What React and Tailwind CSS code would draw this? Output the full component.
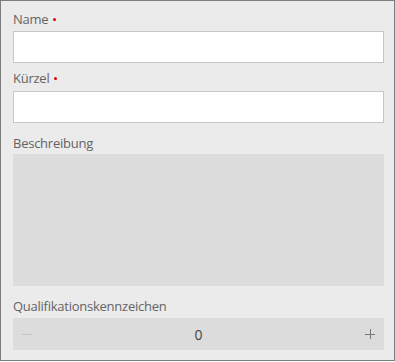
import React from 'react';

const Label = ({ children, required, className = '' }) => (
    <div className={`flex items-center h-5 leading-5 text-[13px] tracking-[-0.25px] text-[#646464] ${className}`}>
        <span>{children}</span>
        {required && <span className="ml-[5px] w-[3px] h-[3px] rounded-full bg-[#e00000]" />}
    </div>
);

const App = () => {
    return (
        <div
            className="w-[395px] h-[361px] border border-[#7d7d7d] bg-[#ebebeb] pl-[12px] pr-[10px] pt-[8px]"
            style={{ fontFamily: '"Open Sans", "Noto Sans", sans-serif' }}
        >
            {/* Name */}
            <Label required>Name</Label>
            <input type="text" className="mt-[2px] block w-full h-8 bg-white border border-[#c6c6c6] outline-none px-2 text-sm" />

            {/* Kürzel */}
            <Label required className="mt-[5px]">Kürzel</Label>
            <input type="text" className="mt-[3px] block w-full h-8 bg-white border border-[#c6c6c6] outline-none px-2 text-sm" />

            {/* Beschreibung */}
            <Label className="mt-[10px]">Beschreibung</Label>
            <div className="mt-[1px] w-full h-[132px] bg-[#dcdcdc]" />

            {/* Qualifikationskennzeichen */}
            <Label className="mt-[10px]">Qualifikationskennzeichen</Label>
            <div className="mt-[2px] w-full h-8 bg-[#dcdcdc] flex items-center justify-between px-[9px]">
                <svg width="10" height="10" viewBox="0 0 10 10">
                    <path d="M0 5.5 H10" stroke="#c4c4c4" strokeWidth="1" />
                </svg>
                <span className="text-[14px] text-[#444]">0</span>
                <svg width="10" height="10" viewBox="0 0 10 10">
                    <path d="M0 5.5 H10 M5.5 0 V10" stroke="#767676" strokeWidth="1" />
                </svg>
            </div>
        </div>
    );
};

export default App;
